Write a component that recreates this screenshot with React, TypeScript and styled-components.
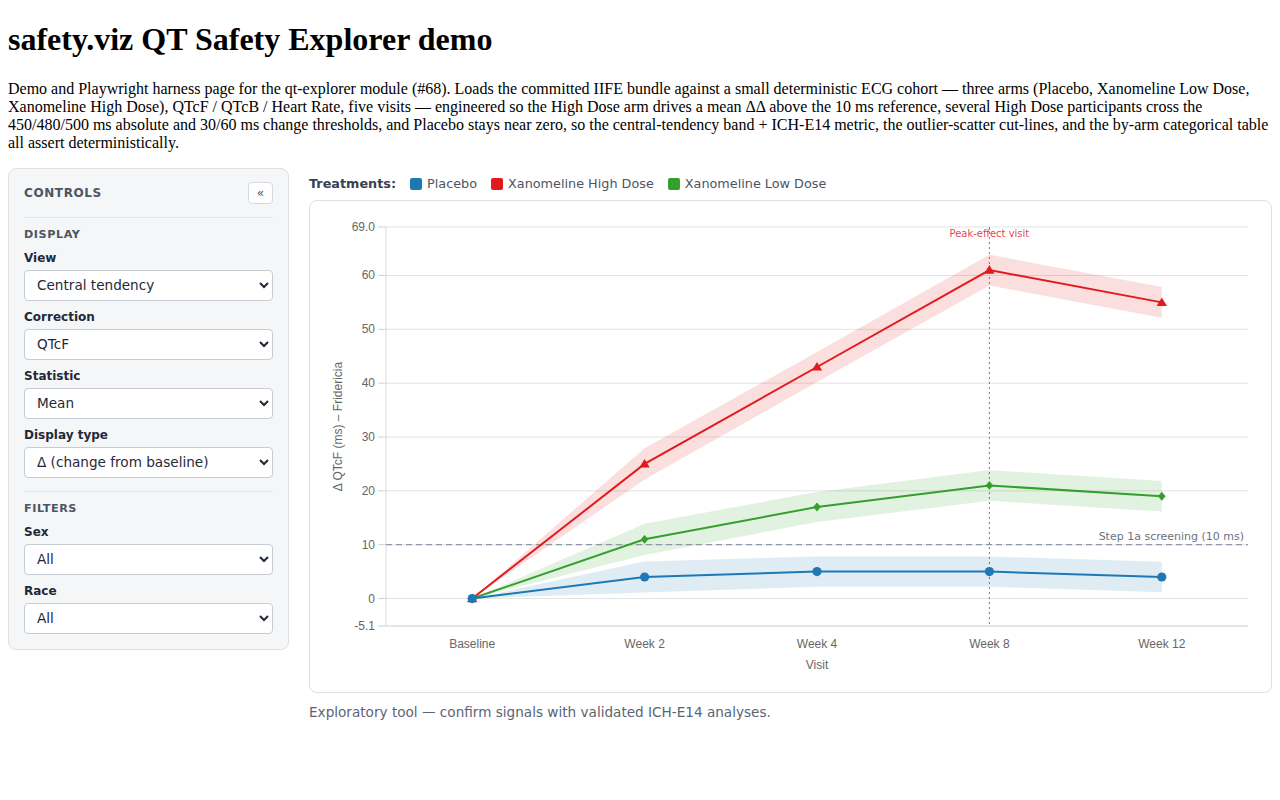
import React from "react";
import styled, { createGlobalStyle } from "styled-components";

const GlobalStyle = createGlobalStyle`
  body {
    margin: 8px;
    font-family: "Liberation Serif", "Times New Roman", serif;
    background: #ffffff;
    color: #000000;
  }
`;

const UI_FONT = `"DejaVu Sans", Verdana, sans-serif`;
const CHART_FONT = `"Liberation Sans", Arial, sans-serif`;

const Title = styled.h1`
  font-size: 32px;
  margin: 13.44px 0 21.44px;
`;

const Intro = styled.p`
  font-size: 16px;
  margin: 16px 0;
`;

const Layout = styled.div`
  display: flex;
  align-items: flex-start;
  gap: 20px;
  font-family: ${UI_FONT};
`;

const Sidebar = styled.aside`
  flex: none;
  width: 281px;
  box-sizing: border-box;
  padding: 13px 15px 15px;
  background: #f5f6f8;
  border: 1px solid #dde1e6;
  border-radius: 8px;
`;

const SidebarHeader = styled.div`
  display: flex;
  align-items: center;
  justify-content: space-between;
  padding-bottom: 13px;
  border-bottom: 1px solid #e1e4e8;
`;

const Heading = styled.div<{ $size?: number }>`
  font-size: ${({ $size }) => $size ?? 11.2}px;
  font-weight: 700;
  letter-spacing: 0.05em;
  color: #4b5563;
  text-transform: uppercase;
`;

const CollapseButton = styled.button`
  width: 25px;
  height: 22px;
  padding: 0;
  display: flex;
  align-items: center;
  justify-content: center;
  background: #ffffff;
  border: 1px solid #d5dae0;
  border-radius: 4px;
  color: #4b5563;
  font-size: 12px;
  font-family: ${UI_FONT};
`;

const Section = styled.section<{ $divider?: boolean }>`
  padding-top: 9px;
  ${({ $divider }) =>
    $divider &&
    `
    margin-top: 13px;
    border-top: 1px solid #e1e4e8;
  `}

  ${Heading} {
    line-height: 16px;
    margin-bottom: 7px;
  }
`;

const Field = styled.label`
  display: flex;
  flex-direction: column;
  gap: 4px;

  & + & {
    margin-top: 8px;
  }
`;

const FieldLabel = styled.span`
  font-size: 12px;
  line-height: 16px;
  font-weight: 700;
  color: #1f2937;
`;

const Select = styled.select`
  height: 31px;
  box-sizing: border-box;
  padding: 0 8px;
  font-family: ${UI_FONT};
  font-size: 13.6px;
  color: #1f2937;
  background: #ffffff;
  border: 1px solid #c6ccd4;
  border-radius: 4px;
`;

const Main = styled.main`
  flex: 1;
  min-width: 0;
`;

const Legend = styled.div`
  display: flex;
  align-items: center;
  gap: 14px;
  padding-top: 8px;
  margin-bottom: 8px;
  font-size: 12.8px;
  line-height: 16px;
  color: #4b5563;
`;

const LegendTitle = styled.span`
  font-weight: 700;
  color: #374151;
`;

const LegendItem = styled.span`
  display: inline-flex;
  align-items: center;
  gap: 5px;
`;

const Swatch = styled.span<{ $color: string }>`
  width: 12px;
  height: 12px;
  border-radius: 2px;
  background: ${({ $color }) => $color};
`;

const ChartCard = styled.div`
  border: 1px solid #dde1e6;
  border-radius: 8px;
  background: #ffffff;
  height: 491px;

  svg {
    display: block;
  }
`;

const Footnote = styled.div`
  margin-top: 11px;
  font-size: 13.6px;
  color: #5b6473;
`;

// chart geometry
const W = 960;
const H = 491;
const PLOT = { left: 76, right: 938, top: 26, bottom: 425 };
const Y_MIN = -5.1;
const Y_MAX = 69.0;
const VISITS = ["Baseline", "Week 2", "Week 4", "Week 8", "Week 12"];
const STEP = (PLOT.right - PLOT.left) / VISITS.length;
const xAt = (i: number) => PLOT.left + STEP * (i + 0.5);
const yAt = (v: number) =>
  PLOT.top + ((Y_MAX - v) / (Y_MAX - Y_MIN)) * (PLOT.bottom - PLOT.top);

type Arm = {
  name: string;
  color: string;
  marker: "circle" | "triangle" | "diamond";
  mean: number[];
  half: number[];
};

const ARMS: Arm[] = [
  {
    name: "Xanomeline High Dose",
    color: "#e31a1c",
    marker: "triangle",
    mean: [0, 25, 43, 61, 55],
    half: [0, 2.9, 2.8, 2.85, 2.85],
  },
  {
    name: "Xanomeline Low Dose",
    color: "#33a02c",
    marker: "diamond",
    mean: [0, 11, 17, 21, 19],
    half: [0, 2.9, 2.8, 2.85, 2.85],
  },
  {
    name: "Placebo",
    color: "#1f78b4",
    marker: "circle",
    mean: [0, 4, 5, 5, 4],
    half: [0, 2.9, 2.8, 2.8, 2.85],
  },
];

const TICKS = [
  { v: 69.0, label: "69.0" },
  { v: 60, label: "60" },
  { v: 50, label: "50" },
  { v: 40, label: "40" },
  { v: 30, label: "30" },
  { v: 20, label: "20" },
  { v: 10, label: "10" },
  { v: 0, label: "0" },
  { v: -5.1, label: "-5.1" },
];

function Marker({ kind, x, y, color }: { kind: Arm["marker"]; x: number; y: number; color: string }) {
  if (kind === "circle") return <circle cx={x} cy={y} r={4.6} fill={color} />;
  if (kind === "triangle")
    return <path d={`M${x},${y - 5} L${x + 5.2},${y + 3.6} L${x - 5.2},${y + 3.6} Z`} fill={color} />;
  return <path d={`M${x},${y - 4.4} L${x + 3.8},${y} L${x},${y + 4.4} L${x - 3.8},${y} Z`} fill={color} />;
}

function BandChart() {
  const peakX = xAt(3);
  const refY = yAt(10);

  return (
    <svg width={W} height={H} viewBox={`0 0 ${W} ${H}`}>
      {/* grid */}
      {TICKS.map((t) => (
        <g key={t.label}>
          {t.v !== Y_MIN && (
            <line x1={PLOT.left} x2={PLOT.right} y1={yAt(t.v)} y2={yAt(t.v)} stroke="#e3e3e3" />
          )}
          <line x1={PLOT.left - 8} x2={PLOT.left} y1={yAt(t.v)} y2={yAt(t.v)} stroke="#cfcfcf" />
          <text
            x={PLOT.left - 11}
            y={yAt(t.v) + 4}
            textAnchor="end"
            fontFamily={CHART_FONT}
            fontSize={12}
            fill="#666"
          >
            {t.label}
          </text>
        </g>
      ))}
      <line x1={PLOT.left} x2={PLOT.left} y1={PLOT.top} y2={PLOT.bottom} stroke="#dcdcdc" />
      <line x1={PLOT.left} x2={PLOT.right} y1={PLOT.bottom} y2={PLOT.bottom} stroke="#cccccc" />

      {/* visits */}
      {VISITS.map((v, i) => (
        <text
          key={v}
          x={xAt(i)}
          y={447}
          textAnchor="middle"
          fontFamily={CHART_FONT}
          fontSize={12}
          fill="#666"
        >
          {v}
        </text>
      ))}
      <text x={xAt(2)} y={468} textAnchor="middle" fontFamily={CHART_FONT} fontSize={12} fill="#666">
        Visit
      </text>
      <text
        transform={`translate(32 ${(PLOT.top + PLOT.bottom) / 2}) rotate(-90)`}
        textAnchor="middle"
        fontFamily={CHART_FONT}
        fontSize={12}
        fill="#666"
      >
        Δ QTcF (ms) – Fridericia
      </text>

      {/* confidence bands */}
      {ARMS.map((a) => {
        const upper = a.mean.map((m, i) => `${xAt(i)},${yAt(m + a.half[i])}`);
        const lower = a.mean.map((m, i) => `${xAt(i)},${yAt(m - a.half[i])}`).reverse();
        return (
          <polygon key={a.name} points={[...upper, ...lower].join(" ")} fill={a.color} opacity={0.14} />
        );
      })}

      {/* screening reference */}
      <line
        x1={PLOT.left}
        x2={PLOT.right}
        y1={refY}
        y2={refY}
        stroke="#8c96a8"
        strokeWidth={1.2}
        strokeDasharray="6 4"
      />
      <text x={PLOT.right - 4} y={refY - 5} textAnchor="end" fontFamily={UI_FONT} fontSize={11} fill="#6b7280">
        Step 1a screening (10 ms)
      </text>

      {/* peak visit */}
      <line
        x1={peakX}
        x2={peakX}
        y1={PLOT.top}
        y2={PLOT.bottom}
        stroke="#e31a1c"
        strokeOpacity={0.8}
        strokeDasharray="2 3"
      />
      <text
        x={peakX}
        y={PLOT.top + 10}
        textAnchor="middle"
        fontFamily={UI_FONT}
        fontSize={10}
        fill="#e31a1c"
        fillOpacity={0.85}
      >
        Peak-effect visit
      </text>

      {/* series */}
      {ARMS.map((a) => (
        <g key={a.name}>
          <polyline
            points={a.mean.map((m, i) => `${xAt(i)},${yAt(m)}`).join(" ")}
            fill="none"
            stroke={a.color}
            strokeWidth={2}
          />
          {a.mean.map((m, i) => (
            <Marker key={i} kind={a.marker} x={xAt(i)} y={yAt(m)} color={a.color} />
          ))}
        </g>
      ))}
    </svg>
  );
}

const FIELDS_DISPLAY = [
  { label: "View", value: "Central tendency" },
  { label: "Correction", value: "QTcF" },
  { label: "Statistic", value: "Mean" },
  { label: "Display type", value: "Δ (change from baseline)" },
];

const FIELDS_FILTERS = [
  { label: "Sex", value: "All" },
  { label: "Race", value: "All" },
];

function Fields({ items }: { items: { label: string; value: string }[] }) {
  return (
    <>
      {items.map((f) => (
        <Field key={f.label}>
          <FieldLabel>{f.label}</FieldLabel>
          <Select defaultValue={f.value}>
            <option>{f.value}</option>
          </Select>
        </Field>
      ))}
    </>
  );
}

export default function App() {
  return (
    <>
      <GlobalStyle />
      <Title>safety.viz QT Safety Explorer demo</Title>
      <Intro>
        Demo and Playwright harness page for the qt-explorer module (#68). Loads the committed IIFE bundle
        against a small deterministic ECG cohort — three arms (Placebo, Xanomeline Low Dose, Xanomeline High
        Dose), QTcF / QTcB / Heart Rate, five visits — engineered so the High Dose arm drives a mean ΔΔ above
        the 10 ms reference, several High Dose participants cross the 450/480/500 ms absolute and 30/60 ms
        change thresholds, and Placebo stays near zero, so the central-tendency band + ICH-E14 metric, the
        outlier-scatter cut-lines, and the by-arm categorical table all assert deterministically.
      </Intro>
      <Layout>
        <Sidebar>
          <SidebarHeader>
            <Heading $size={12}>Controls</Heading>
            <CollapseButton type="button">«</CollapseButton>
          </SidebarHeader>
          <Section>
            <Heading>Display</Heading>
            <Fields items={FIELDS_DISPLAY} />
          </Section>
          <Section $divider>
            <Heading>Filters</Heading>
            <Fields items={FIELDS_FILTERS} />
          </Section>
        </Sidebar>
        <Main>
          <Legend>
            <LegendTitle>Treatments:</LegendTitle>
            <LegendItem>
              <Swatch $color="#1f78b4" />
              Placebo
            </LegendItem>
            <LegendItem>
              <Swatch $color="#e31a1c" />
              Xanomeline High Dose
            </LegendItem>
            <LegendItem>
              <Swatch $color="#33a02c" />
              Xanomeline Low Dose
            </LegendItem>
          </Legend>
          <ChartCard>
            <BandChart />
          </ChartCard>
          <Footnote>Exploratory tool — confirm signals with validated ICH-E14 analyses.</Footnote>
        </Main>
      </Layout>
    </>
  );
}
